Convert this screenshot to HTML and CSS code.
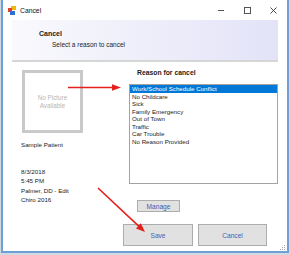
FILE: index.html
```html
<!DOCTYPE html>
<html lang="en">

<head>
    <meta charset="UTF-8">
    <title>Cancel</title>
    <link rel="stylesheet" href="styles.css">
</head>

<body>
    <div class="window">
        <div class="titlebar">
            <svg class="app-icon" width="8" height="9" viewBox="0 0 8 9">
                <rect x="3" y="0" width="5" height="4" fill="#f2b705" />
                <rect x="0" y="2" width="4" height="4" fill="#e2402f" />
                <rect x="2" y="5" width="5" height="4" fill="#2f6fd0" />
            </svg>
            <span class="title">Cancel</span>
            <div class="controls">
                <span class="ctl"><i class="min"></i></span>
                <span class="ctl"><i class="max"></i></span>
                <span class="ctl">
                    <svg width="7" height="7" viewBox="0 0 7 7">
                        <path d="M0.5 0.5 L6.5 6.5 M6.5 0.5 L0.5 6.5" stroke="#333" stroke-width="0.9" />
                    </svg>
                </span>
            </div>
        </div>

        <div class="client">
            <div class="header">
                <b class="header-title">Cancel</b>
                <p class="header-sub">Select a reason to cancel</p>
            </div>

            <div class="main">
                <div class="patient">
                    <div class="photo">No Picture<br />Available</div>
                    <p class="patient-name">Sample Patient</p>
                    <p class="visit">
                        8/3/2018<br />
                        5:45 PM<br />
                        Palmer, DD - Edit<br />
                        Chiro 2016
                    </p>
                </div>

                <div class="reasons">
                    <b class="reasons-label">Reason for cancel</b>
                    <ul class="reason-list">
                        <li class="selected">Work/School Schedule Conflict</li>
                        <li>No Childcare</li>
                        <li>Sick</li>
                        <li>Family Emergency</li>
                        <li>Out of Town</li>
                        <li>Traffic</li>
                        <li>Car Trouble</li>
                        <li>No Reason Provided</li>
                    </ul>
                    <button class="btn manage">Manage</button>
                </div>
            </div>

            <div class="actions">
                <button class="btn save">Save</button>
                <button class="btn cancel">Cancel</button>
            </div>
        </div>
    </div>

    <!-- red callout arrows drawn over the dialog -->
    <svg class="overlay" width="290" height="255" viewBox="0 0 290 255">
        <line x1="68" y1="87.5" x2="114" y2="87.5" stroke="#e3201b" stroke-width="1.6" />
        <polygon points="112,84.3 121,87.5 112,90.7" fill="#e3201b" />
        <line x1="98" y1="188" x2="139.5" y2="226.8" stroke="#e3201b" stroke-width="1.6" />
        <polygon points="136,228.4 140.8,223.3 145,232" fill="#e3201b" />
        <g fill="#a9a9a9">
            <rect x="284" y="245" width="1" height="1" />
            <rect x="282" y="247" width="1" height="1" />
            <rect x="284" y="247" width="1" height="1" />
            <rect x="280" y="249" width="1" height="1" />
            <rect x="282" y="249" width="1" height="1" />
            <rect x="284" y="249" width="1" height="1" />
        </g>
    </svg>
</body>

</html>
```

FILE: styles.css
```css
html,
body {
    margin: 0;
    height: 100%;
    overflow: hidden;
}

body {
    background-color: #d3d9e0;
    font-family: "Liberation Sans", Arial, sans-serif;
    color: #1b1b1b;
}

.window {
    display: flex;
    flex-direction: column;
    margin-left: 1px;
    width: 284px;
    height: 251px;
    border: 2px solid #6d9fd9;
    border-top: none;
    background-color: #fff;
}

.titlebar {
    display: flex;
    align-items: center;
    height: 20px;
}

.app-icon {
    margin-left: 5px;
}

.title {
    margin-left: 4px;
    font-size: 6.8px;
    color: #111;
}

.controls {
    display: flex;
    margin-left: auto;
}

.ctl {
    display: flex;
    align-items: center;
    justify-content: center;
    width: 26.5px;
    height: 20px;
}

.min {
    width: 6px;
    height: 1px;
    background-color: #555;
}

.max {
    width: 5px;
    height: 5px;
    border: 1px solid #555;
}

.client {
    flex: 1;
    padding: 0 9px;
}

.header {
    box-sizing: border-box;
    height: 42px;
    padding: 8.5px 0 0 27px;
    border-bottom: 2px solid #d6d6d6;
    background: linear-gradient(to right, #f9f9fd, #e3e3f8);
}

.header-title {
    display: block;
    font-size: 7px;
    line-height: 9px;
}

.header-sub {
    margin: 2px 0 0 13px;
    font-size: 6.5px;
    line-height: 9px;
}

.main {
    display: flex;
}

.patient {
    width: 117px;
    padding-top: 8px;
}

.photo {
    display: flex;
    align-items: center;
    justify-content: center;
    width: 55px;
    height: 57px;
    margin-left: 10px;
    border: 3px solid #c9c9c9;
    font-size: 6.3px;
    line-height: 8px;
    text-align: center;
    color: #b6b6b6;
}

.patient-name {
    margin: 6.5px 0 0 9px;
    font-size: 6.2px;
    line-height: 9px;
}

.visit {
    margin: 18px 0 0 9px;
    font-size: 6.2px;
    line-height: 9.5px;
}

.reasons {
    width: 149px;
}

.reasons-label {
    display: block;
    margin: 5.5px 0 0 8px;
    font-size: 6.8px;
    line-height: 9px;
}

.reason-list {
    box-sizing: border-box;
    height: 100px;
    margin: 7.5px 0 0;
    padding: 0;
    list-style: none;
    border: 1px solid #a3a3a3;
    font-size: 6.2px;
    line-height: 7.5px;
}

.reason-list li {
    padding-left: 2px;
    white-space: nowrap;
}

.reason-list .selected {
    background-color: #0078d7;
    color: #fff;
}

.btn {
    padding: 0;
    font-family: inherit;
    font-size: 6.6px;
    color: #3d5fb8;
    background-color: #e1e1e1;
    border: 1px solid #adadad;
}

.manage {
    display: block;
    width: 43px;
    height: 12px;
    margin: 16px 0 0 8px;
}

.actions {
    display: flex;
    justify-content: flex-end;
    gap: 5px;
    margin-top: 12px;
    padding-right: 11px;
}

.save {
    width: 70px;
    height: 22px;
}

.cancel {
    width: 69px;
    height: 22px;
}

.overlay {
    position: absolute;
    top: 0;
    left: 0;
    pointer-events: none;
}
```
